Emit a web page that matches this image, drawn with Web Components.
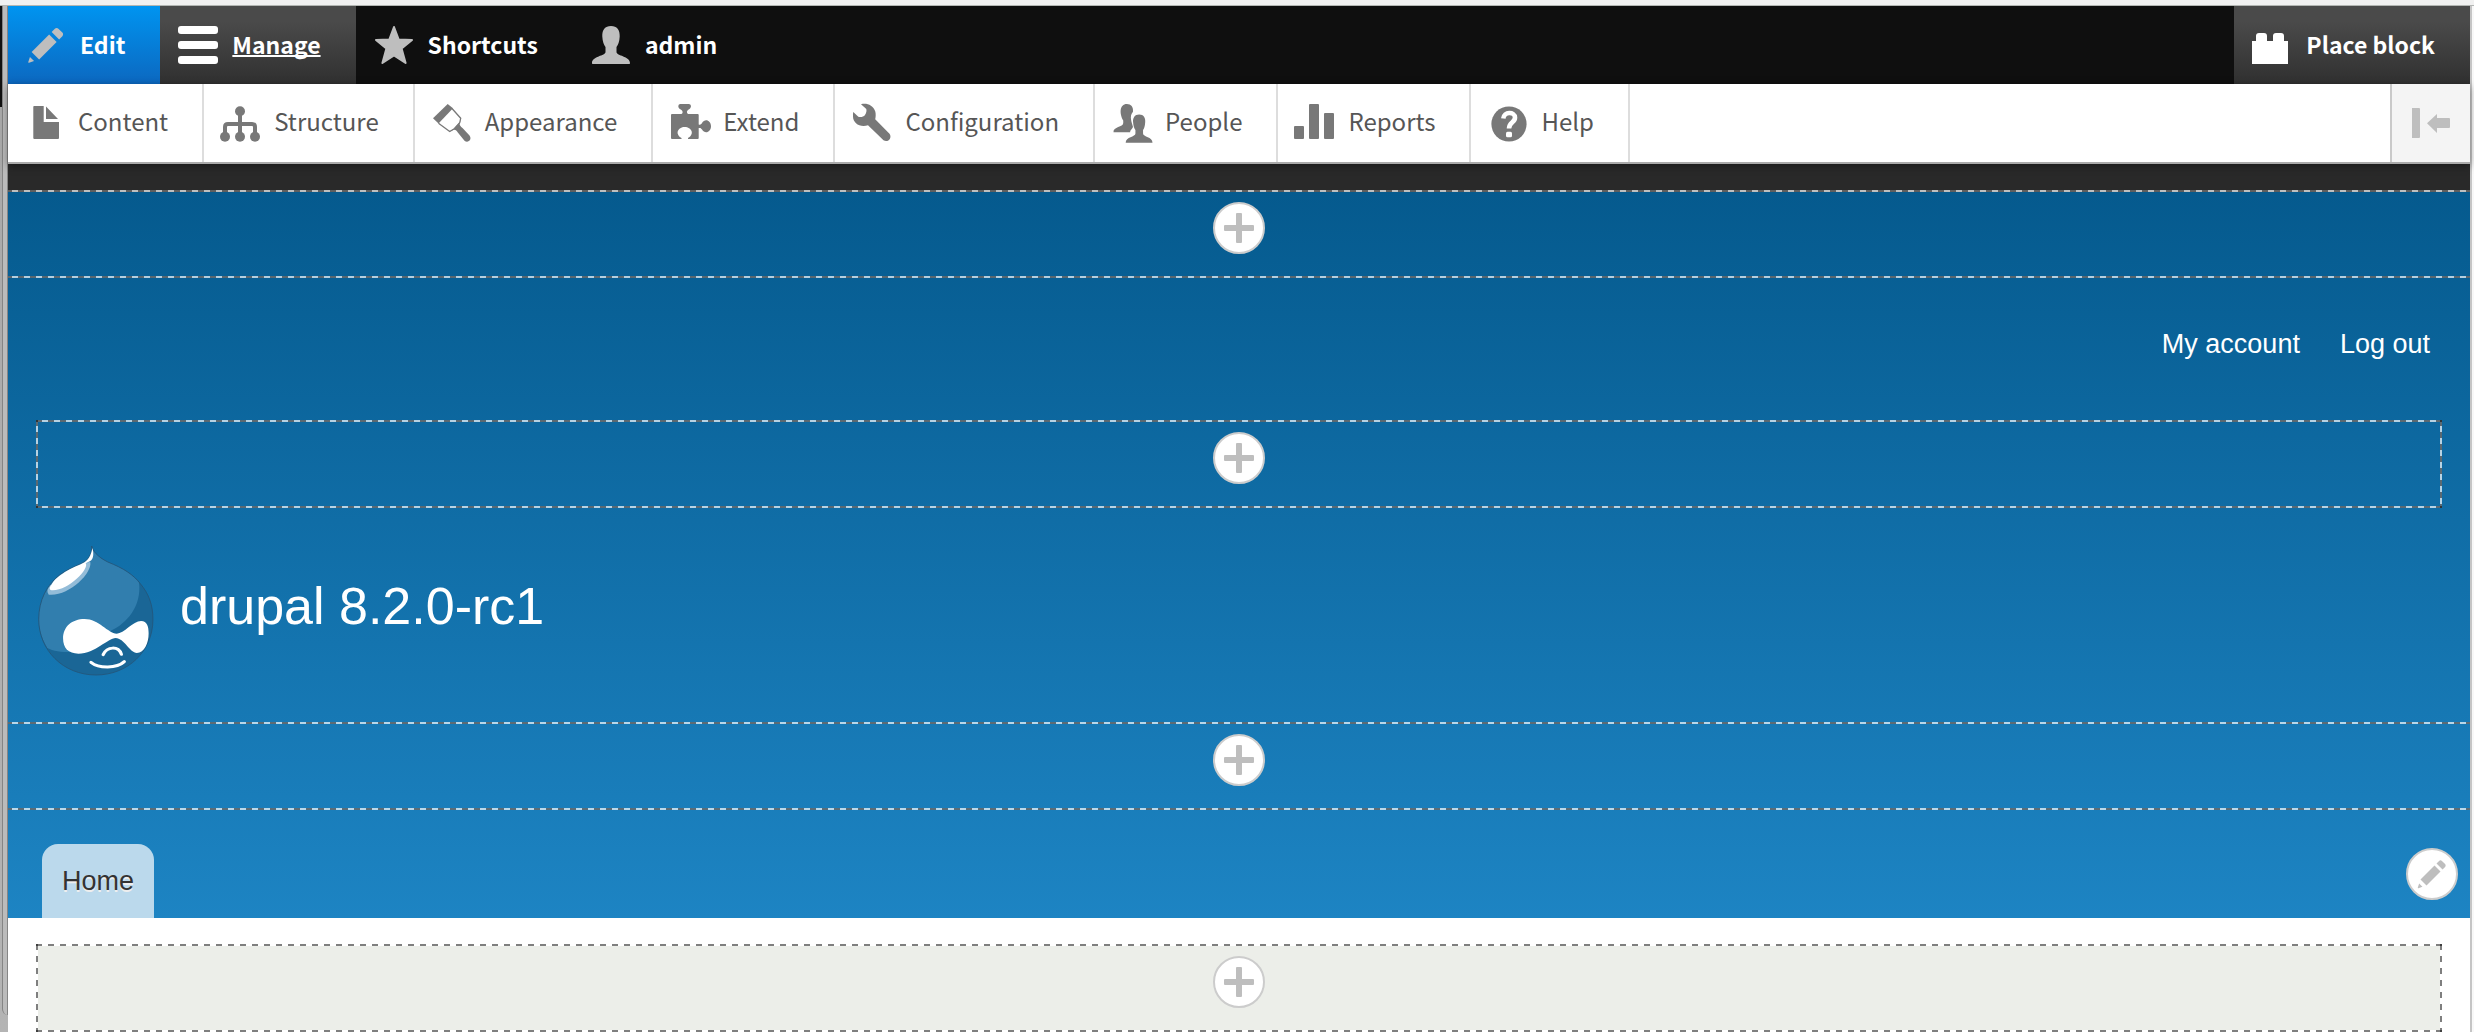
<!DOCTYPE html>
<html lang="en">
<head>
<meta charset="utf-8">
<title>drupal 8.2.0-rc1</title>
<style>
    html, body {
        margin: 0;
        height: 100%;
    }

    body {
        --toolbar-font: "Noto Sans CJK SC", "Noto Sans", sans-serif;
        --page-font: "Liberation Sans", Arial, sans-serif;
        --icon-light: #bebebe;
        --icon-dark: #787878;
        font-family: var(--page-font);
        background: #f1f1f1;
    }
</style>
</head>
<body>
<browser-window>
    <tool-bar>
        <toolbar-tab kind="button" icon="pencil" active="blue">Edit</toolbar-tab>
        <toolbar-tab icon="menu" active="grey" current>Manage</toolbar-tab>
        <toolbar-tab icon="star">Shortcuts</toolbar-tab>
        <toolbar-tab icon="person">admin</toolbar-tab>
        <toolbar-tab slot="end" kind="button" icon="block" active="grey">Place block</toolbar-tab>
    </tool-bar>
    <toolbar-tray>
        <tray-item icon="file">Content</tray-item>
        <tray-item icon="structure">Structure</tray-item>
        <tray-item icon="brush">Appearance</tray-item>
        <tray-item icon="puzzle">Extend</tray-item>
        <tray-item icon="wrench">Configuration</tray-item>
        <tray-item icon="people">People</tray-item>
        <tray-item icon="bars">Reports</tray-item>
        <tray-item icon="help">Help</tray-item>
    </toolbar-tray>
    <site-header>
        <block-region wide></block-region>
        <account-menu>
            <a href="#">My account</a>
            <a href="#">Log out</a>
        </account-menu>
        <block-region></block-region>
        <site-branding>drupal 8.2.0-rc1</site-branding>
        <block-region wide></block-region>
        <main-menu>Home</main-menu>
    </site-header>
    <site-content>
        <block-region filled></block-region>
    </site-content>
</browser-window>

<script>
    const icons = {
        pencil: `<svg viewBox="0 0 16 16"><path d="M14.545 3.042l-1.586-1.585c-.389-.389-1.025-.389-1.414 0l-1.293 1.293 3 3 1.293-1.293c.389-.389.389-1.026 0-1.415z"/><rect x="5.129" y="3.8" transform="matrix(-.707 -.707 .707 -.707 6.189 20.064)" width="4.243" height="9.899"/><path d="M.908 14.775c-.087.262.055.397.316.312l2.001-.667-1.65-1.646-.667 2.001z"/></svg>`,
        menu: `<svg viewBox="0 0 40 40"><rect y="1" width="40" height="8" rx="3"/><rect y="16" width="40" height="8" rx="3"/><rect y="31" width="40" height="8" rx="3"/></svg>`,
        star: `<svg viewBox="0 0 40 40"><path stroke="currentColor" stroke-width="2" stroke-linejoin="round" d="M20 2l4.600 12.400 13.400.5-10.400 8.600 4 14.500L20 30.500 8.400 38l4-14.500L2 14.900l13.400-.5z"/></svg>`,
        person: `<svg viewBox="0 0 40 40"><path d="M20 1c6 0 9 4 8.700 10.500-.2 5-1.700 8.500-3.200 10.500v5c0 4 13.500 4 13.500 11 0 .7-.3 1-1 1H2c-.7 0-1-.3-1-1 0-7 13.500-7 13.500-11v-5c-1.500-2-3-5.500-3.200-10.500C11 5 14 1 20 1z"/></svg>`,
        block: `<svg viewBox="0 0 40 40"><path d="M0 16h4v-5q0-3 3-3h5q3 0 3 3v5h6v-5q0-3 3-3h5q3 0 3 3v5h4v23H0z"/></svg>`,
        file: `<svg viewBox="0 0 40 40"><path d="M8 3h9.700v16H33v16q0 1-1 1H8.300q-1 0-1-1V4q0-1 .7-1zM20 3.500L32 16H20z"/></svg>`,
        structure: `<svg viewBox="0 0 40 40"><path fill="none" stroke="currentColor" stroke-width="4" d="M3 33v-9q0-3 3-3h24q3 0 3 3v9M18 8v25"/><circle cx="18" cy="8.300" r="5"/><circle cx="3" cy="33.700" r="5"/><circle cx="18" cy="33.700" r="5"/><circle cx="33" cy="33.700" r="5"/></svg>`,
        brush: `<svg viewBox="0 0 40 40"><path d="M14.700 1l5.300 4.300L5.500 20.500 0 15.300z"/><path fill="none" stroke="currentColor" stroke-width="1.300" d="M19 5.500l8.700 9.800-1 4.500-5.400 6-4.600 2.700L5.500 20.300"/><path d="M28.300 15.300l-1.600 4.900c-.4 1.800 1 3.300 2.800 4.800l7 7.500c3 4-1.500 8-5 5.200l-6.500-8c-1.500-2.500-3-3.700-5-2.700l-3 1.500 4.300-3.200 5.400-6z"/></svg>`,
        puzzle: `<svg viewBox="0 0 40 40"><path d="M1 11h9.500c1.500-1 1.500-2.500 0-4C9 6 7 5 7.300 3q.2-2 2-2h8.500q1.900 0 2.200 2c0 2-1.500 3-3 4s-1.500 3 0 4h9.700q1 0 1 1v9.500c1.500.5 2.500 0 3.300-1.500 3-5 9-2.500 9 3.300s-6 8.300-9 3.300c-.8-1.500-1.800-2-3.300-1.500V35q0 1-1 1H17v-1c7-4 3.500-11-3.300-11S3.500 31 10.500 35v1H1q-1 0-1-1V12q0-1 1-1z"/></svg>`,
        wrench: `<svg viewBox="0 0 40 40"><path d="M8 1.300c6-1.500 12 1 14.200 7 .8 2.700.5 5.700 0 8L36.500 30.700c3 4-1.500 9.500-6 6.600L15 22.300C7 25 0 20 0 13.500c0-2-.1-3.300.3-4.500l5 4.700c2 .9 5.200.3 6.700-1.700 1.300-2 1.800-4.200 1.300-6z"/></svg>`,
        people: `<svg viewBox="0 0 40 41"><path d="M13.700 1C18 1 20.500 4 20 9c-2 2-2.500 5-2 8 .4 3 1.300 5 2 7.500-1 2.500-3 3-3 5.500H0c-.5-6 10-5 10-9.500V18C6 11 6 1 13.700 1z"/><path d="M26.300 11.700c4.700 0 6.700 3.500 6.200 8-.3 4-1 6.300-2.200 8v3.500c0 3.800 9.700 3 9.700 9.500H12.500c0-6.500 10-5.700 10-9.500v-3.500c-1.200-1.700-2.100-4-2.400-8-.4-4.500 1.600-8 6.200-8z"/></svg>`,
        bars: `<svg viewBox="0 0 40 40"><rect x="-2" y="23" width="10" height="13" rx="1"/><rect x="13" y="1" width="10" height="35" rx="1"/><rect x="28" y="10" width="10" height="26" rx="1"/></svg>`,
        help: `<svg viewBox="0 0 40 40"><circle cx="20" cy="21" r="17.600"/><path fill="none" stroke="#fff" stroke-width="4.600" d="M14.300 15.500c.5-7.200 11.400-7.200 11.700-1 .2 5-6 4.500-6 11"/><rect x="17" y="28.700" width="6" height="5.600" rx="1.500" fill="#fff"/></svg>`,
        plus: `<svg viewBox="0 0 40 40"><path d="M6 17h11V6q0-1 1-1h4q1 0 1 1v11h11q1 0 1 1v4q0 1-1 1H23v11q0 1-1 1h-4q-1 0-1-1V23H6q-1 0-1-1v-4q0-1 1-1z"/></svg>`,
        collapse: `<svg viewBox="0 0 38 30"><path d="M0 0h7q1 0 1 1v28q0 1-1 1H0zM15 15.300L25 6v4h12q1 0 1 1v8q0 1-1 1H25v5z"/></svg>`
    };

    // Inline svg box shared by every element that shows an icon
    const iconStyle = `
        svg {
            display: block;
            flex: none;
            width: 40px;
            height: 40px;
            overflow: visible;
            fill: currentColor;
        }
    `;

    class BrowserWindow extends HTMLElement {
        constructor() {
            super();
            this.attachShadow({ mode: "open" }).innerHTML = `
                <style>
                    :host {
                        display: grid;
                        grid-template-columns: 8px minmax(0, 1fr) 4px;
                        grid-template-rows: 6px 1fr;
                        min-height: 100%;
                    }

                    #top {
                        box-sizing: border-box;
                        grid-column: 1 / -1;
                        background: #f1f1f1;
                        border-bottom: 1px solid #b3b6b3;
                    }

                    #left {
                        display: grid;
                        grid-template-columns: 2px 1fr;
                        background: linear-gradient(#111 101px, #a9a9a9 101px, #b4b4b4);
                    }

                    #edge {
                        grid-column: 2;
                        margin-bottom: 17px;
                        box-sizing: border-box;
                        background: #bbb;
                        border: 1px solid #858585;
                        border-width: 0 1px;
                        border-bottom-left-radius: 6px;
                    }

                    #page {
                        background: #fff;
                    }

                    #right {
                        background: #f8f8f8;
                        border-left: 2px solid #c5c5c5;
                    }
                </style>
                <div id="top"></div>
                <div id="left"><div id="edge"></div></div>
                <div id="page"><slot></slot></div>
                <div id="right"></div>
            `;
        }
    }

    class ToolBar extends HTMLElement {
        constructor() {
            super();
            this.attachShadow({ mode: "open" }).innerHTML = `
                <style>
                    :host {
                        display: block;
                        background: #0f0f0f;
                    }

                    nav {
                        display: flex;
                        height: 78px;
                    }

                    #end {
                        display: flex;
                        margin-left: auto;
                    }
                </style>
                <nav aria-label="Toolbar">
                    <slot></slot>
                    <div id="end"><slot name="end"></slot></div>
                </nav>
            `;
        }
    }

    class ToolbarTab extends HTMLElement {
        constructor() {
            super();
            const icon = icons[this.getAttribute("icon")];
            const content = `${icon}<span><slot></slot></span>`;
            const control = this.getAttribute("kind") == "button"
                ? `<button type="button" id="tab">${content}</button>`
                : `<a href="#" id="tab">${content}</a>`;
            this.attachShadow({ mode: "open" }).innerHTML = `
                <style>
                    ${iconStyle}

                    :host {
                        display: flex;
                    }

                    #tab {
                        display: flex;
                        align-items: center;
                        gap: 14px;
                        padding: 0 35px 0 18px;
                        border: 0;
                        background: none;
                        color: #fff;
                        font: 700 23px/36px var(--toolbar-font);
                        text-decoration: none;
                        white-space: nowrap;
                        cursor: pointer;
                    }

                    span {
                        padding-bottom: 2px;
                    }

                    svg {
                        color: var(--icon-light);
                    }

                    :host([active="blue"]) #tab {
                        background: linear-gradient(#0094f0, #0c68c0);
                    }

                    :host([active="grey"]) #tab {
                        background: linear-gradient(#4a4a4a 20%, #303030);
                    }

                    :host([active="grey"]) svg {
                        color: #fff;
                    }

                    :host([current]) span {
                        text-decoration: underline;
                        text-decoration-thickness: 2px;
                        text-decoration-skip-ink: none;
                    }
                </style>
                ${control}
            `;
        }
    }

    class ToolbarTray extends HTMLElement {
        constructor() {
            super();
            this.attachShadow({ mode: "open" }).innerHTML = `
                <style>
                    ${iconStyle}

                    :host {
                        display: block;
                        position: relative;
                        background: #fff;
                        border-bottom: 2px solid #aaa;
                        box-shadow: 0 2px 8px rgba(0, 0, 0, 0.4);
                    }

                    nav {
                        display: flex;
                        height: 78px;
                    }

                    ::slotted(:not(:first-child)) {
                        border-left: 2px solid #ddd;
                    }

                    ::slotted(:last-child) {
                        border-right: 2px solid #ddd;
                    }

                    button {
                        margin-left: auto;
                        padding: 0 20px;
                        border: 0;
                        border-left: 2px solid #c9c9c9;
                        background: #f4f4f4;
                        color: var(--icon-light);
                        cursor: pointer;
                    }

                    svg {
                        width: 38px;
                        height: 30px;
                    }
                </style>
                <nav aria-label="Administration menu">
                    <slot></slot>
                    <button type="button" aria-label="Vertical orientation">${icons.collapse}</button>
                </nav>
            `;
        }
    }

    class TrayItem extends HTMLElement {
        constructor() {
            super();
            this.attachShadow({ mode: "open" }).innerHTML = `
                <style>
                    ${iconStyle}

                    :host {
                        display: flex;
                    }

                    a {
                        display: flex;
                        align-items: center;
                        gap: 12px;
                        padding: 0 34px 0 18px;
                        color: #565656;
                        font: 400 24px/36px var(--toolbar-font);
                        text-decoration: none;
                        white-space: nowrap;
                    }

                    span {
                        padding-bottom: 4px;
                    }

                    svg {
                        color: var(--icon-dark);
                    }
                </style>
                <a href="#">${icons[this.getAttribute("icon")]}<span><slot></slot></span></a>
            `;
        }
    }

    class RoundButton extends HTMLElement {
        constructor() {
            super();
            this.attachShadow({ mode: "open" }).innerHTML = `
                <style>
                    ${iconStyle}

                    :host {
                        display: block;
                    }

                    button {
                        display: flex;
                        align-items: center;
                        justify-content: center;
                        box-sizing: border-box;
                        width: 52px;
                        height: 52px;
                        padding: 0;
                        border: 2px solid #ccc;
                        border-radius: 50%;
                        background: #fff;
                        color: var(--icon-light);
                        cursor: pointer;
                    }

                    :host([icon="pencil"]) svg {
                        width: 32px;
                        height: 32px;
                    }
                </style>
                <button type="button" aria-label="${this.getAttribute("label")}">${icons[this.getAttribute("icon")]}</button>
            `;
        }
    }

    class BlockRegion extends HTMLElement {
        constructor() {
            super();
            this.attachShadow({ mode: "open" }).innerHTML = `
                <style>
                    :host {
                        --dash: rgba(0, 0, 0, 0.5) 0 6px, transparent 6px 12px;
                        --line: rgba(255, 255, 255, 0.7);
                        display: flex;
                        justify-content: center;
                        align-items: flex-start;
                        box-sizing: border-box;
                        height: 88px;
                        padding-top: 12px;
                        margin: 0 28px;
                        background:
                            repeating-linear-gradient(90deg, var(--dash)) 0 0 / 100% 2px,
                            repeating-linear-gradient(90deg, var(--dash)) 0 100% / 100% 2px,
                            repeating-linear-gradient(var(--dash)) 0 0 / 2px 100%,
                            repeating-linear-gradient(var(--dash)) 100% 0 / 2px 100%,
                            linear-gradient(var(--line) 0 0) 0 0 / 100% 2px,
                            linear-gradient(var(--line) 0 0) 0 100% / 100% 2px,
                            linear-gradient(var(--line) 0 0) 0 2px / 2px calc(100% - 4px),
                            linear-gradient(var(--line) 0 0) 100% 2px / 2px calc(100% - 4px);
                        background-repeat: no-repeat;
                    }

                    /* Full-bleed regions only show their top and bottom edges */
                    :host([wide]) {
                        margin: 0;
                        background:
                            repeating-linear-gradient(90deg, var(--dash)) -2px 0 / calc(100% + 4px) 2px,
                            repeating-linear-gradient(90deg, var(--dash)) -2px 100% / calc(100% + 4px) 2px,
                            linear-gradient(var(--line) 0 0) 0 0 / 100% 2px,
                            linear-gradient(var(--line) 0 0) 0 100% / 100% 2px;
                        background-repeat: no-repeat;
                    }

                    :host([filled]) {
                        --line: #fff;
                        background-color: #eceee9;
                    }
                </style>
                <round-button icon="plus" label="Place block in region"></round-button>
            `;
        }
    }

    class SiteHeader extends HTMLElement {
        constructor() {
            super();
            this.attachShadow({ mode: "open" }).innerHTML = `
                <style>
                    :host {
                        display: block;
                        padding-top: 26px;
                        background: linear-gradient(#292929 28px, #055a8e 28px, #1d84c3);
                    }
                </style>
                <header><slot></slot></header>
            `;
        }
    }

    class AccountMenu extends HTMLElement {
        constructor() {
            super();
            this.attachShadow({ mode: "open" }).innerHTML = `
                <style>
                    :host {
                        display: flex;
                        justify-content: flex-end;
                        gap: 40px;
                        padding: 50px 40px 60px;
                        font-size: 27px;
                        line-height: 32px;
                    }

                    ::slotted(a) {
                        color: #fff;
                        text-decoration: none;
                    }
                </style>
                <slot></slot>
            `;
        }
    }

    class SiteBranding extends HTMLElement {
        constructor() {
            super();
            this.attachShadow({ mode: "open" }).innerHTML = `
                <style>
                    :host {
                        display: block;
                        padding: 36px 30px 46px;
                    }

                    a {
                        display: flex;
                        align-items: flex-start;
                        gap: 26px;
                        color: #fff;
                        font-size: 52px;
                        line-height: 124px;
                        text-decoration: none;
                    }

                    svg {
                        width: 116px;
                        height: 132px;
                    }
                </style>
                <a href="#">
                    <svg viewBox="105 72 324 396" preserveAspectRatio="none" aria-hidden="true">
                        <path fill="#1a6696" d="M255 78C258 92 270 110 300 126C345 145 372 165 390 190C415 222 426 255 426 298C426 395 355 465 267 465C175 465 107 390 107 298C107 240 130 195 165 165C190 145 215 138 235 125C250 115 256 95 255 78Z"/>
                        <path fill="#317eae" d="M255 78C258 92 270 110 300 126C345 145 370 165 387 187C396 260 350 312 312 330L220 396C180 397 150 396 131 384C112 350 107 320 107 298C107 240 130 195 165 165C190 145 215 138 235 125C250 115 256 95 255 78Z"/>
                        <path fill="none" stroke="#24567a" stroke-width="2.500" d="M255 78C258 92 270 110 300 126C345 145 372 165 390 190C415 222 426 255 426 298C426 395 355 465 267 465C175 465 107 390 107 298C107 240 130 195 165 165C190 145 215 138 235 125C250 115 256 95 255 78Z"/>
                        <path fill="#93bcd8" d="M251 126C257 160 190 230 135 224C128 214 132 205 140 196L235 128Z"/>
                        <path fill="#fff" d="M257 84C262 104 260 122 245 126L238 130C250 145 190 214 143 211C135 208 137 202 142 195C150 178 165 167 180 156C200 143 220 136 235 127C250 115 254 100 257 84Z"/>
                        <path fill="#fff" d="M175 355C175 320 200 297 235 297C275 297 300 340 325 341C345 341 370 303 393 303C410 303 414 320 414 340C414 370 402 399 381 399C362 399 345 354 322 354C300 354 265 401 218 401C190 401 175 385 175 355Z"/>
                        <path fill="none" stroke="#fff" stroke-width="9" stroke-linecap="round" d="M287 404C298 378 330 378 338 403M253 427C275 446 325 446 346 425"/>
                    </svg>
                    <span><slot></slot></span>
                </a>
            `;
        }
    }

    class MainMenu extends HTMLElement {
        constructor() {
            super();
            this.attachShadow({ mode: "open" }).innerHTML = `
                <style>
                    :host {
                        display: flex;
                        justify-content: space-between;
                        padding: 34px 12px 0 34px;
                    }

                    a {
                        padding: 21px 20px;
                        border-radius: 16px 16px 0 0;
                        background: #bbd9ec;
                        color: #333;
                        font-size: 27px;
                        line-height: 32px;
                        text-decoration: none;
                        text-shadow: 0 2px 0 #eee;
                    }

                    round-button {
                        padding-top: 4px;
                    }
                </style>
                <a href="#"><slot></slot></a>
                <round-button icon="pencil" label="Configure menu"></round-button>
            `;
        }
    }

    class SiteContent extends HTMLElement {
        constructor() {
            super();
            this.attachShadow({ mode: "open" }).innerHTML = `
                <style>
                    :host {
                        display: block;
                        padding-top: 26px;
                    }
                </style>
                <main><slot></slot></main>
            `;
        }
    }

    customElements.define("browser-window", BrowserWindow);
    customElements.define("tool-bar", ToolBar);
    customElements.define("toolbar-tab", ToolbarTab);
    customElements.define("toolbar-tray", ToolbarTray);
    customElements.define("tray-item", TrayItem);
    customElements.define("round-button", RoundButton);
    customElements.define("block-region", BlockRegion);
    customElements.define("site-header", SiteHeader);
    customElements.define("account-menu", AccountMenu);
    customElements.define("site-branding", SiteBranding);
    customElements.define("main-menu", MainMenu);
    customElements.define("site-content", SiteContent);
</script>
</body>
</html>
